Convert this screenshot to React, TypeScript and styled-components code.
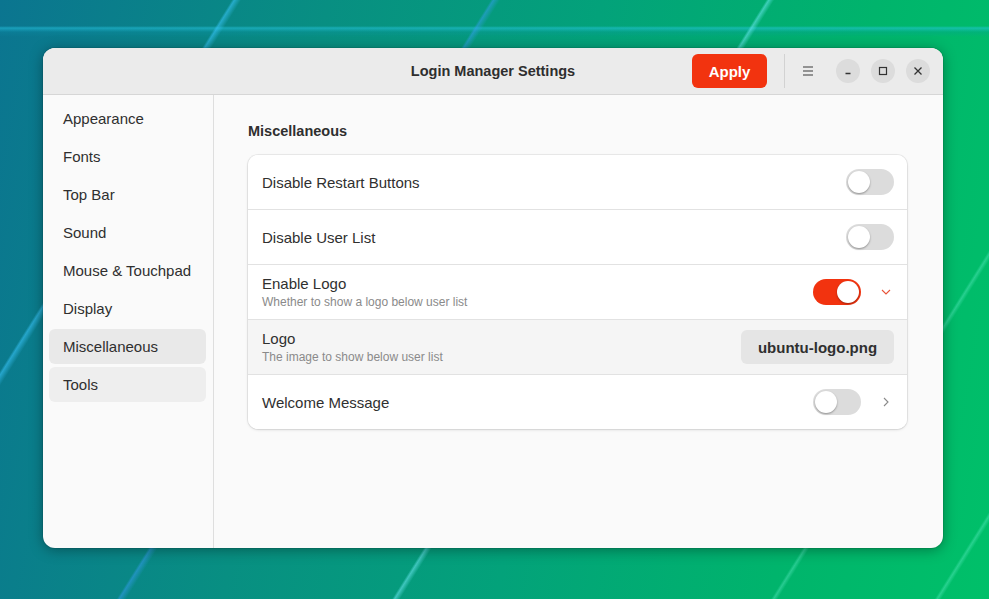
import React from "react";
import styled, { createGlobalStyle } from "styled-components";

const Global = createGlobalStyle`
  html, body { margin: 0; padding: 0; }
  body {
    width: 989px; height: 599px; overflow: hidden;
    font-family: "Liberation Sans", "Noto Sans", sans-serif;
  }
`;

const Desktop = styled.div`
  width: 989px;
  height: 599px;
  box-sizing: border-box;
  padding: 48px 46px 51px 43px;
  background:
    linear-gradient(122deg, transparent 0 56.2%, rgba(120,240,255,0.5) 56.4%, transparent 56.8%),
    linear-gradient(122deg, transparent 0 17%, rgba(60,200,255,0.55) 17.2%, transparent 17.7%),
    linear-gradient(122deg, transparent 0 36%, rgba(60,160,255,0.45) 36.2%, transparent 36.7%),
    linear-gradient(122deg, transparent 0 84%, rgba(130,255,230,0.3) 84.2%, transparent 84.5%),
    linear-gradient(122deg, transparent 0 96%, rgba(130,255,230,0.3) 96.2%, transparent 96.5%),
    linear-gradient(180deg, transparent 0 26px, rgba(40,200,230,0.5) 28px, rgba(10,150,180,0.2) 32px, transparent 37px),
    linear-gradient(100deg, #0b7590 0%, #088f82 30%, #03a27a 55%, #00b46c 80%, #00c069 100%);
`;

const Window = styled.div`
  width: 900px;
  height: 500px;
  border-radius: 12px;
  overflow: hidden;
  background: #fafafa;
  box-shadow: 0 2px 14px rgba(0,0,0,0.35), 0 0 0 1px rgba(0,0,0,0.08);
  display: flex;
  flex-direction: column;
`;

const HeaderBar = styled.div`
  height: 46px;
  flex: none;
  background: #ebebeb;
  border-bottom: 1px solid #d6d6d6;
  display: grid;
  grid-template-columns: 1fr auto 1fr;
  align-items: center;
`;

const Title = styled.div`
  grid-column: 2;
  font-weight: 700;
  font-size: 14.5px;
  color: #2e2e2e;
`;

const HeaderEnd = styled.div`
  grid-column: 3;
  display: flex;
  align-items: center;
  justify-content: flex-end;
  padding-right: 13px;
`;

const ApplyButton = styled.button`
  width: 75px;
  height: 34px;
  border: none;
  border-radius: 6px;
  background: #f2330f;
  color: #fff;
  font-family: inherit;
  font-weight: 700;
  font-size: 15px;
  padding: 0;
`;

const Separator = styled.div`
  width: 1px;
  height: 34px;
  background: #d2d2d2;
  margin: 0 6px 0 17px;
`;

const MenuButton = styled.div`
  width: 34px;
  height: 34px;
  display: flex;
  align-items: center;
  justify-content: center;
  color: #3a3a3a;
  margin-right: 11px;
`;

const WinButton = styled.div<{ $last?: boolean }>`
  width: 24px;
  height: 24px;
  border-radius: 50%;
  background: #dcdcdc;
  display: flex;
  align-items: center;
  justify-content: center;
  color: #333;
  margin-right: ${(p) => (p.$last ? 0 : 11)}px;
`;

const Body = styled.div`
  flex: 1;
  display: flex;
  min-height: 0;
`;

const Sidebar = styled.nav`
  width: 171px;
  flex: none;
  border-right: 1px solid #dedede;
  padding: 6px 7px 6px 6px;
  box-sizing: border-box;
  display: flex;
  flex-direction: column;
  gap: 3px;
`;

const NavItem = styled.div<{ $bg?: string }>`
  height: 35px;
  border-radius: 6px;
  padding-left: 14px;
  display: flex;
  align-items: center;
  font-size: 15px;
  color: #2f2f2f;
  background: ${(p) => p.$bg || "transparent"};
`;

const Content = styled.main`
  flex: 1;
  padding: 26px 36px 0 34px;
`;

const SectionTitle = styled.h2`
  margin: 0 0 14px;
  font-size: 14.5px;
  font-weight: 700;
  color: #2f2f2f;
  line-height: 20px;
`;

const Card = styled.div`
  background: #ffffff;
  border-radius: 10px;
  box-shadow: 0 0 0 1px rgba(0,0,0,0.06), 0 1px 3px rgba(0,0,0,0.12);
  overflow: hidden;
`;

const Row = styled.div<{ $sub?: boolean }>`
  height: 54px;
  display: flex;
  align-items: center;
  padding: 0 13px 0 14px;
  background: ${(p) => (p.$sub ? "#f5f5f5" : "#fff")};
  & + & { border-top: 1px solid #e2e2e2; }
`;

const Labels = styled.div`
  flex: 1;
  display: flex;
  flex-direction: column;
  gap: 3px;
`;

const RowTitle = styled.div`
  font-size: 15px;
  color: #303030;
`;

const RowSubtitle = styled.div`
  font-size: 12px;
  color: #8a8a8a;
`;

const Track = styled.div<{ $on?: boolean }>`
  width: 48px;
  height: 26px;
  border-radius: 13px;
  background: ${(p) => (p.$on ? "#f2330f" : "#dcdcdc")};
  display: flex;
  align-items: center;
  justify-content: ${(p) => (p.$on ? "flex-end" : "flex-start")};
  padding: 0 2px;
  box-sizing: border-box;
`;

const Knob = styled.div`
  width: 22px;
  height: 22px;
  border-radius: 50%;
  background: #fff;
  box-shadow: 0 1px 2px rgba(0,0,0,0.35);
`;

const Chevron = styled.div<{ $color: string }>`
  width: 16px;
  margin-left: 17px;
  display: flex;
  justify-content: center;
  color: ${(p) => p.$color};
`;

const FileButton = styled.button`
  height: 34px;
  width: 153px;
  border: none;
  border-radius: 6px;
  background: #e5e5e5;
  font-family: inherit;
  font-weight: 700;
  font-size: 15px;
  color: #2f2f2f;
  padding: 0;
`;

const Toggle = ({ on }: { on?: boolean }) => (
  <Track $on={on}>
    <Knob />
  </Track>
);

const navItems = [
  "Appearance",
  "Fonts",
  "Top Bar",
  "Sound",
  "Mouse & Touchpad",
  "Display",
  "Miscellaneous",
  "Tools",
];

export default function App() {
  return (
    <>
      <Global />
      <Desktop>
        <Window>
          <HeaderBar>
            <Title>Login Manager Settings</Title>
            <HeaderEnd>
              <ApplyButton>Apply</ApplyButton>
              <Separator />
              <MenuButton>
                <svg width="14" height="14" viewBox="0 0 14 14">
                  <path d="M2 3h10M2 7h10M2 11h10" stroke="currentColor" strokeWidth="1.2" />
                </svg>
              </MenuButton>
              <WinButton>
                <svg width="10" height="10" viewBox="0 0 10 10">
                  <path d="M2.5 7.5h5" stroke="currentColor" strokeWidth="1.3" />
                </svg>
              </WinButton>
              <WinButton>
                <svg width="10" height="10" viewBox="0 0 10 10">
                  <rect x="1.5" y="1.5" width="7" height="7" fill="none" stroke="currentColor" strokeWidth="1.2" />
                </svg>
              </WinButton>
              <WinButton $last>
                <svg width="10" height="10" viewBox="0 0 10 10">
                  <path d="M1.5 1.5l7 7M8.5 1.5l-7 7" stroke="currentColor" strokeWidth="1.3" />
                </svg>
              </WinButton>
            </HeaderEnd>
          </HeaderBar>
          <Body>
            <Sidebar>
              {navItems.map((n) => (
                <NavItem
                  key={n}
                  $bg={n === "Miscellaneous" ? "#e9e9e9" : n === "Tools" ? "#eeeeee" : undefined}
                >
                  {n}
                </NavItem>
              ))}
            </Sidebar>
            <Content>
              <SectionTitle>Miscellaneous</SectionTitle>
              <Card>
                <Row>
                  <Labels>
                    <RowTitle>Disable Restart Buttons</RowTitle>
                  </Labels>
                  <Toggle />
                </Row>
                <Row>
                  <Labels>
                    <RowTitle>Disable User List</RowTitle>
                  </Labels>
                  <Toggle />
                </Row>
                <Row>
                  <Labels>
                    <RowTitle>Enable Logo</RowTitle>
                    <RowSubtitle>Whether to show a logo below user list</RowSubtitle>
                  </Labels>
                  <Toggle on />
                  <Chevron $color="#e8553a">
                    <svg width="12" height="8" viewBox="0 0 12 8">
                      <path d="M2 2l4 4 4-4" fill="none" stroke="currentColor" strokeWidth="1.1" />
                    </svg>
                  </Chevron>
                </Row>
                <Row $sub>
                  <Labels>
                    <RowTitle>Logo</RowTitle>
                    <RowSubtitle>The image to show below user list</RowSubtitle>
                  </Labels>
                  <FileButton>ubuntu-logo.png</FileButton>
                </Row>
                <Row>
                  <Labels>
                    <RowTitle>Welcome Message</RowTitle>
                  </Labels>
                  <Toggle />
                  <Chevron $color="#8a8a8a">
                    <svg width="8" height="12" viewBox="0 0 8 12">
                      <path d="M2 2l4 4-4 4" fill="none" stroke="currentColor" strokeWidth="1.1" />
                    </svg>
                  </Chevron>
                </Row>
              </Card>
            </Content>
          </Body>
        </Window>
      </Desktop>
    </>
  );
}
